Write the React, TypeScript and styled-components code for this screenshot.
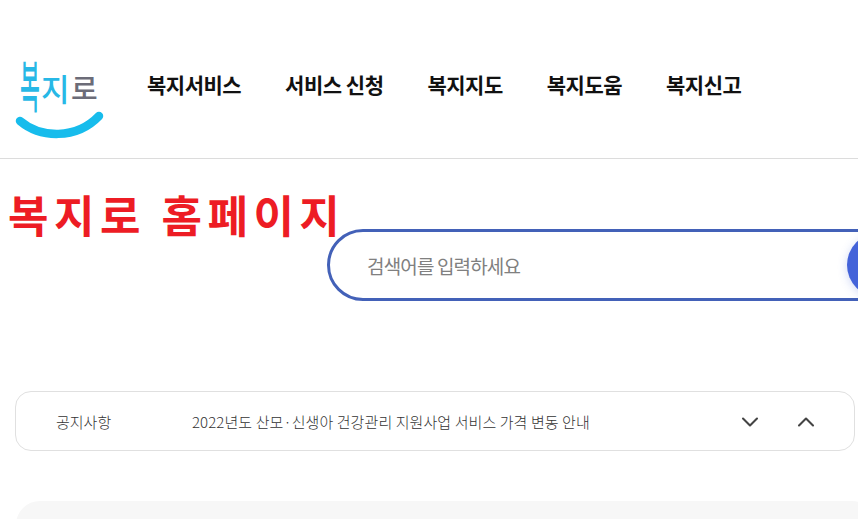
import styled, { createGlobalStyle } from 'styled-components'
import { ChevronDown, ChevronUp } from 'lucide-react'

const NAV_ITEMS = ['복지서비스', '서비스 신청', '복지지도', '복지도움', '복지신고']

const GlobalStyle = createGlobalStyle`
  html, body {
    margin: 0;
    height: 100%;
    overflow: hidden;
    background: #fff;
  }
  * {
    box-sizing: border-box;
  }
  body {
    font-family: 'Noto Sans CJK KR', 'Noto Sans', sans-serif;
  }
`

const Page = styled.div`
  width: 858px;
  height: 519px;
  overflow: hidden;
`

const Header = styled.header`
  display: flex;
  align-items: flex-start;
  height: 159px;
  padding: 56px 0 0 14px;
  border-bottom: 1px solid #dcdcdc;
`

const LogoSvg = styled.svg`
  flex: none;
  width: 90px;
  height: 84px;
`

const LogoText = styled.text<{ $color: string }>`
  font-family: 'Noto Sans CJK KR', sans-serif;
  font-weight: 500;
  fill: ${(p) => p.$color};
`

const Nav = styled.nav`
  display: flex;
  gap: 44px;
  margin: 13px 0 0 43px;
`

const NavLink = styled.a`
  font-size: 21px;
  line-height: 30px;
  font-weight: 700;
  letter-spacing: -0.5px;
  color: #111;
  white-space: nowrap;
`

const Hero = styled.section`
  height: 232px;
  padding-top: 24px;
`

const Title = styled.h1`
  position: relative;
  z-index: 1;
  margin: 0 0 0 8px;
  font-size: 44px;
  line-height: 62px;
  height: 46px;
  font-weight: 700;
  letter-spacing: 5.5px;
  color: #ed1c24;
  white-space: nowrap;
`

const SearchBox = styled.div`
  display: flex;
  align-items: center;
  width: 620px;
  height: 72px;
  margin-left: 327px;
  padding: 0 3px 0 37px;
  border: 3px solid #4361b8;
  border-radius: 36px;
`

const SearchText = styled.span`
  flex: 1;
  font-size: 19px;
  letter-spacing: -0.85px;
  color: #808080;
`

const SearchButton = styled.span`
  flex: none;
  width: 64px;
  height: 64px;
  margin-right: 30px;
  border-radius: 50%;
  background: #4463d9;
  box-shadow: 0 2px 10px rgba(68, 99, 217, 0.25);
`

const NoticeBar = styled.div`
  display: flex;
  align-items: center;
  width: 840px;
  height: 60px;
  margin-left: 15px;
  padding: 1px 34px 0 40px;
  border: 1px solid #e0e0e0;
  border-radius: 16px;
`

const NoticeLabel = styled.span`
  flex: none;
  width: 136px;
  font-size: 15px;
  font-weight: 300;
  color: #333;
`

const NoticeText = styled.span`
  flex: 1;
  font-size: 15px;
  letter-spacing: 0.09px;
  font-weight: 300;
  color: #333;
  white-space: nowrap;
`

const NoticeControls = styled.div`
  display: flex;
  gap: 28px;
  padding-top: 1px;
  color: #444;
`

const BottomPanel = styled.div`
  width: 860px;
  height: 80px;
  margin: 50px 0 0 16px;
  border-radius: 24px;
  background: #f7f7f7;
`

function Logo() {
  return (
    <LogoSvg viewBox="0 0 90 84" aria-label="복지로">
      <LogoText $color="#27b8e6" fontSize="30" transform="translate(6 51) scale(0.72 1.85)">
        복
      </LogoText>
      <LogoText $color="#27b8e6" fontSize="31" x="27" y="45">
        지
      </LogoText>
      <LogoText $color="#6c6c78" fontSize="29" x="57" y="44">
        로
      </LogoText>
      <path d="M6 65 C 26 82, 62 84, 85 60" fill="none" stroke="#17bcec" strokeWidth="8.5" strokeLinecap="round" />
    </LogoSvg>
  )
}

function App() {
  return (
    <Page>
      <GlobalStyle />
      <Header>
        <Logo />
        <Nav>
          {NAV_ITEMS.map((item) => (
            <NavLink key={item}>{item}</NavLink>
          ))}
        </Nav>
      </Header>
      <Hero>
        <Title>복지로 홈페이지</Title>
        <SearchBox>
          <SearchText>검색어를 입력하세요</SearchText>
          <SearchButton />
        </SearchBox>
      </Hero>
      <NoticeBar>
        <NoticeLabel>공지사항</NoticeLabel>
        <NoticeText>2022년도 산모·신생아 건강관리 지원사업 서비스 가격 변동 안내</NoticeText>
        <NoticeControls>
          <ChevronDown size={28} strokeWidth={1.8} />
          <ChevronUp size={28} strokeWidth={1.8} />
        </NoticeControls>
      </NoticeBar>
      <BottomPanel />
    </Page>
  )
}

export default App
